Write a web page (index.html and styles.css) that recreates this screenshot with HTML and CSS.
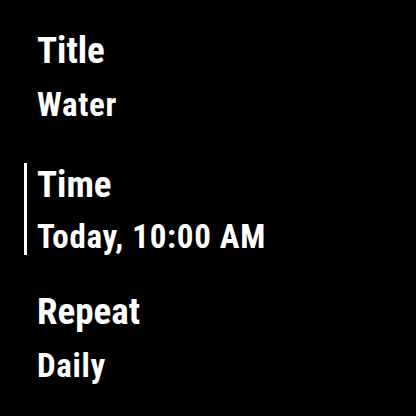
FILE: index.html
```html
<!DOCTYPE html>
<html lang="en">
<head>
    <meta charset="UTF-8">
    <title>Reminder</title>
    <link rel="stylesheet" href="styles.css">
</head>
<body>
    <div class="list">
        <div class="item">
            <div class="label">Title</div>
            <div class="value">Water</div>
        </div>
        <div class="item selected">
            <div class="label">Time</div>
            <div class="value">Today, 10:00 AM</div>
        </div>
        <div class="item">
            <div class="label">Repeat</div>
            <div class="value">Daily</div>
        </div>
    </div>
</body>
</html>
```

FILE: styles.css
```css
body {
    margin: 0;
    background: #000;
    color: #fff;
    font-family: "Roboto Condensed", Roboto, sans-serif;
    font-weight: 700;
    width: 416px;
    height: 416px;
}

.list {
    display: flex;
    flex-direction: column;
    gap: 35px;
    padding-top: 29px;
}

.item {
    border-left: 3px solid transparent;
    margin-left: 24px;
    padding-left: 10px;
}

/* focused row gets the white bar on the left */
.item.selected {
    border-left-color: #fff;
    margin-top: 3px;
}

.item.selected .value {
    line-height: 36px;
}

.label {
    font-size: 37px;
    line-height: 44px;
    margin-bottom: 12px;
}

.value {
    font-size: 33px;
    letter-spacing: 0.7px;
    line-height: 40px;
}
```
